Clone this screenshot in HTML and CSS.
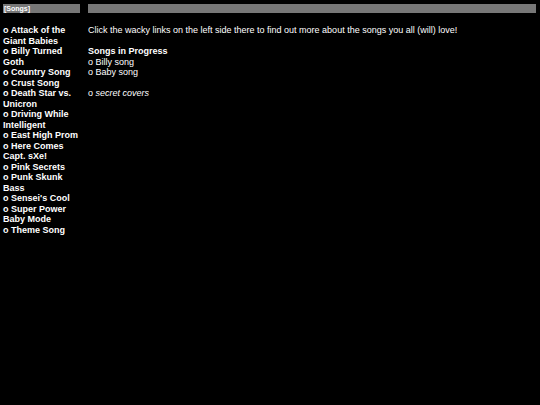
FILE: index.html
```html
<html>
<head>
	<meta charset="utf-8">
	<link rel="stylesheet" href="styles.css">
</head>
<body>
<div class="page">
	<div class="side">
		<div class="bar">[Songs]</div>
		<div class="links">
			o Attack of the Giant Babies<br>
			o Billy Turned Goth<br>
			o Country Song<br>
			o Crust Song<br>
			o Death Star vs. Unicron<br>
			o Driving While Intelligent<br>
			o East High Prom<br>
			o Here Comes Capt. sXe!<br>
			o Pink Secrets<br>
			o Punk Skunk Bass<br>
			o Sensei's Cool<br>
			o Super Power Baby Mode<br>
			o Theme Song
		</div>
	</div>
	<div class="main">
		<div class="bar"></div>
		<div class="content">
			Click the wacky links on the left side there to find out more about the songs you all (will) love!<br>
			<br>
			<b>Songs in Progress</b><br>
			o Billy song<br>
			o Baby song<br>
			<br>
			o <i>secret covers</i>
		</div>
	</div>
</div>
</body>
</html>
```
FILE: styles.css
```css
body {
	margin: 0;
	background: #000;
	color: #fff;
	font-family: "Liberation Sans", Arial, sans-serif;
	font-size: 9px;
}
.page {
	display: flex;
	gap: 8px;
	padding: 4px 4px 0 3px;
}
.side {
	width: 77px;
	flex: none;
}
.main {
	flex: 1;
}
.bar {
	background: #777;
	height: 9px;
	font-size: 7px;
	font-weight: bold;
	line-height: 9px;
	padding-left: 1px;
}
.links {
	font-weight: bold;
	line-height: 10.5px;
	margin-top: 12px;
}
.content {
	line-height: 10.5px;
	margin-top: 12px;
}
```
